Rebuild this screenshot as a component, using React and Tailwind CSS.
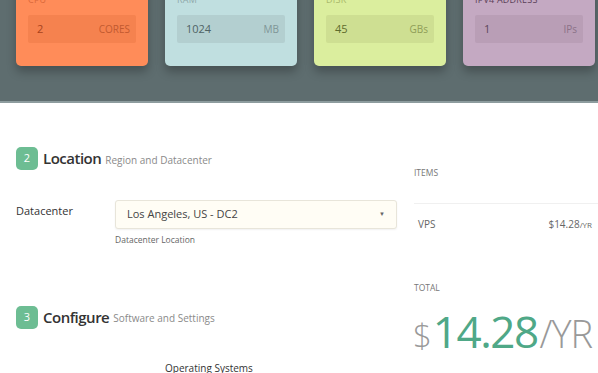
export default function App() {
  const cards = [
    { label: "CPU", value: "2", unit: "CORES", bg: "bg-[#ff8c59]", inner: "bg-[#f5824f]", lab: "text-[#d9683a]", val: "text-[#a8431c]", unitc: "text-[#c25a2f]" },
    { label: "RAM", value: "1024", unit: "MB", bg: "bg-[#c0dfe0]", inner: "bg-[#b3cfd0]", lab: "text-[#8fa9aa]", val: "text-[#4f6365]", unitc: "text-[#7f9697]" },
    { label: "DISK", value: "45", unit: "GBs", bg: "bg-[#dbee9e]", inner: "bg-[#cedf92]", lab: "text-[#a9b86a]", val: "text-[#5e6b2d]", unitc: "text-[#8f9d58]" },
    { label: "IPV4 ADDRESS", value: "1", unit: "IPs", bg: "bg-[#c4a9c2]", inner: "bg-[#b99eb6]", lab: "text-[#5b3f58]", val: "text-[#5d465a]", unitc: "text-[#8b7288]" },
  ];
  const font = { fontFamily: '"Open Sans", "Noto Sans", sans-serif' };
  return (
    <div className="w-[598px] h-[373px] overflow-hidden bg-white" style={font}>
      <div className="h-[103px] bg-[#5e6d6f] border-b-2 border-[#8d9c9e] overflow-hidden">
        <div className="flex gap-[17px] pl-[16px] -mt-[18px]">
          {cards.map((c) => (
            <div key={c.label} className={`w-[132px] h-[84px] rounded-[5px] ${c.bg} shadow-[0_6px_10px_rgba(0,0,0,0.25)] px-[12px] pt-[13px]`}>
              <div className={`text-[9px] leading-[10px] ${c.lab} tracking-wide`}>{c.label}</div>
              <div className={`mt-[10px] h-[28px] rounded-[2px] ${c.inner} flex items-center justify-between pl-[9px] pr-[6px]`}>
                <span className={`text-[11px] ${c.val}`}>{c.value}</span>
                <span className={`text-[10px] ${c.unitc}`}>{c.unit}</span>
              </div>
            </div>
          ))}
        </div>
      </div>
      <div className="flex">
        <div className="w-[398px] pl-[16px]">
          <div className="mt-[44px] flex items-center h-[23px]">
            <div className="w-[22px] h-[23px] rounded-[5px] bg-[#6dbd93] text-white text-[11px] flex items-center justify-center">2</div>
            <span className="ml-[5px] text-[15px] font-semibold text-[#333] tracking-[-0.5px]">Location</span>
            <span className="ml-[4px] text-[10px] text-[#8a8a8a] mt-[3px]">Region and Datacenter</span>
          </div>
          <div className="mt-[30px] flex">
            <div className="w-[99px] text-[11px] text-[#333] pt-[3px]">Datacenter</div>
            <div>
              <div className="w-[282px] h-[29px] border border-[#e8e5da] rounded-[3px] bg-[#fffdf5] flex items-center justify-between px-[11px] shadow-[0_1px_2px_rgba(0,0,0,0.06)]">
                <span className="text-[11px] text-[#444]">Los Angeles, US - DC2</span>
                <span className="text-[6px] text-[#666]">▼</span>
              </div>
              <div className="mt-[5px] text-[8.5px] text-[#666]">Datacenter Location</div>
            </div>
          </div>
          <div className="mt-[59px] flex items-center h-[23px]">
            <div className="w-[22px] h-[23px] rounded-[5px] bg-[#6dbd93] text-white text-[11px] flex items-center justify-center">3</div>
            <span className="ml-[5px] text-[15px] font-semibold text-[#333] tracking-[-0.5px]">Configure</span>
            <span className="ml-[4px] text-[10px] text-[#8a8a8a] mt-[3px]">Software and Settings</span>
          </div>
          <div className="mt-[32px] pl-[149px] text-[10px] text-[#333]">Operating Systems</div>
        </div>
        <div className="flex-1 pl-[16px]">
          <div className="mt-[64px] text-[8.5px] text-[#777]">ITEMS</div>
          <div className="mt-[23px] border-t border-[#f0f0f0]"></div>
          <div className="mt-[13px] flex justify-between pl-[4px] pr-[6px] text-[10px] text-[#666]">
            <span>VPS</span>
            <span>$14.28<span className="text-[8px]">/YR</span></span>
          </div>
          <div className="mt-[50px] text-[8.5px] text-[#777]">TOTAL</div>
          <div className="mt-[14px] flex items-baseline leading-none">
            <span className="text-[33px] text-[#999] font-light -ml-[1px]">$</span>
            <span className="text-[44px] text-[#4fa887] tracking-[-1.5px] ml-[1px]">14.28</span>
            <span className="text-[38px] text-[#999] font-light ml-[2px] tracking-[-1px]">/YR</span>
          </div>
        </div>
      </div>
    </div>
  );
}
